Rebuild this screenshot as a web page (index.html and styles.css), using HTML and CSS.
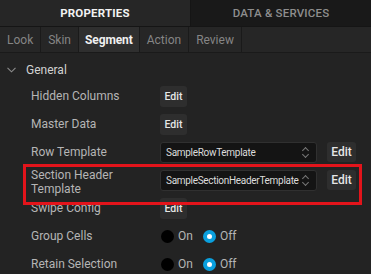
FILE: index.html
```html
<!DOCTYPE html>
<html lang="en">
<head>
  <meta charset="UTF-8" />
  <title>Properties</title>
  <link rel="stylesheet" href="styles.css">
</head>
<body>
  <div class="panel">
    <!-- main tabs -->
    <div class="main-tabs">
      <div class="main-tab active">PROPERTIES</div>
      <div class="main-tab">DATA &amp; SERVICES</div>
    </div>

    <!-- sub tabs -->
    <div class="sub-tabs">
      <div class="sub-tab">Look</div>
      <div class="sub-tab">Skin</div>
      <div class="sub-tab active">Segment</div>
      <div class="sub-tab">Action</div>
      <div class="sub-tab">Review</div>
      <div class="sub-fill"></div>
    </div>

    <div class="content">
      <div class="group-title">
        <svg class="chev" width="9" height="6" viewBox="0 0 9 6"><path d="M0.5 0.8 L4.5 4.8 L8.5 0.8" fill="none" stroke="#8c8c8c" stroke-width="1.1"/></svg>
        <span>General</span>
      </div>

      <div class="row">
        <div class="label">Hidden Columns</div>
        <div class="value"><button class="btn">Edit</button></div>
      </div>
      <div class="row">
        <div class="label">Master Data</div>
        <div class="value"><button class="btn">Edit</button></div>
      </div>
      <div class="row">
        <div class="label">Row Template</div>
        <div class="value">
          <div class="select">SampleRowTemplate<span class="arrows"></span></div>
          <button class="btn big">Edit</button>
        </div>
      </div>
      <div class="row">
        <div class="label two">Section Header<br>Template</div>
        <div class="value">
          <div class="select">SampleSectionHeaderTemplate<span class="arrows"></span></div>
          <button class="btn big">Edit</button>
        </div>
      </div>
      <div class="row">
        <div class="label">Swipe Config</div>
        <div class="value"><button class="btn">Edit</button></div>
      </div>
      <div class="row">
        <div class="label">Group Cells</div>
        <div class="value">
          <span class="radio"></span><span class="opt">On</span>
          <span class="radio on"></span><span class="opt">Off</span>
        </div>
      </div>
      <div class="row">
        <div class="label">Retain Selection</div>
        <div class="value">
          <span class="radio"></span><span class="opt">On</span>
          <span class="radio on"></span><span class="opt">Off</span>
        </div>
      </div>

      <!-- highlight box -->
      <div class="highlight"></div>
    </div>
  </div>
</body>
</html>
```

FILE: styles.css
```css
body {
  margin: 0;
  background: #232323;
  font-family: Roboto, 'Liberation Sans', sans-serif;
  overflow: hidden;
}

.panel {
  width: 371px;
  height: 274px;
  background: #232323;
}

/* main tabs */
.main-tabs {
  display: flex;
  height: 26px;
  border-bottom: 1px solid #151515;
}
.main-tab {
  flex: 0 0 180px;
  display: flex;
  align-items: center;
  justify-content: center;
  font-size: 11.5px;
  font-weight: 500;
  letter-spacing: 0.2px;
  color: #8e8e8e;
  background: #191919;
}
.main-tab.active {
  flex: 0 0 190px;
  color: #f2f2f2;
  background: #262626;
  border-right: 1px solid #151515;
  font-weight: 700;
}

/* sub tabs */
.sub-tabs {
  display: flex;
  height: 25px;
  background: #262626;
  border-bottom: 1px solid #1a1a1a;
}
.sub-tab {
  display: flex;
  align-items: center;
  padding: 0 7px;
  font-size: 12px;
  color: #858585;
  border-right: 1px solid #1a1a1a;
}
.sub-tab.active {
  background: #2f2f2f;
  color: #f0f0f0;
  font-weight: 700;
  padding: 0 6px;
  letter-spacing: -0.1px;
}
.sub-fill {
  flex: 1;
}

/* content */
.content {
  position: relative;
  padding-top: 5px;
}
.group-title {
  display: flex;
  align-items: center;
  height: 24px;
  color: #d2d2d2;
  font-size: 12px;
}
.chev {
  margin: 0 10px 0 7px;
}

.row {
  display: flex;
  align-items: center;
  height: 28px;
}
.label {
  width: 129px;
  padding-left: 31px;
  font-size: 12px;
  line-height: 14px;
  color: #b5b5b5;
}
.label.two {
  padding-top: 3px;
}
.value {
  display: flex;
  align-items: center;
}

.btn {
  font-family: inherit;
  font-size: 10.5px;
  font-weight: 500;
  color: #e6e6e6;
  background: #2e2e2e;
  border: none;
  border-radius: 3px;
  height: 21px;
  width: 27px;
  padding: 0;
}
.btn.big {
  font-size: 12px;
  width: 29px;
  height: 20px;
  margin-left: 10px;
}

.select {
  position: relative;
  box-sizing: border-box;
  width: 157px;
  height: 21px;
  padding-left: 5px;
  line-height: 19px;
  font-size: 10px;
  letter-spacing: -0.3px;
  color: #dcdcdc;
  background: #141414;
  border: 1px solid #303030;
  border-radius: 3px;
  white-space: nowrap;
  overflow: hidden;
}
.arrows {
  position: absolute;
  right: 6px;
  top: 4px;
  width: 8px;
  height: 11px;
  background: #141414;
}
.arrows::before, .arrows::after {
  content: "";
  position: absolute;
  left: 1px;
  width: 4px;
  height: 4px;
  border-left: 1px solid #777;
  border-top: 1px solid #777;
}
.arrows::before {
  top: 1px;
  transform: rotate(45deg);
}
.arrows::after {
  bottom: 1px;
  transform: rotate(-135deg);
}

.radio {
  box-sizing: border-box;
  width: 13px;
  height: 13px;
  border-radius: 50%;
  background: #000;
  margin-left: 1px;
}
.radio.on {
  background: #ffffff;
  border: 4px solid #0aa0de;
  margin-left: 10px;
}
.opt {
  font-size: 12px;
  color: #b5b5b5;
  margin-left: 4px;
}

.highlight {
  position: absolute;
  left: 23px;
  top: 111px;
  width: 333px;
  height: 35px;
  border: 3px solid #e3141b;
  pointer-events: none;
}
```
